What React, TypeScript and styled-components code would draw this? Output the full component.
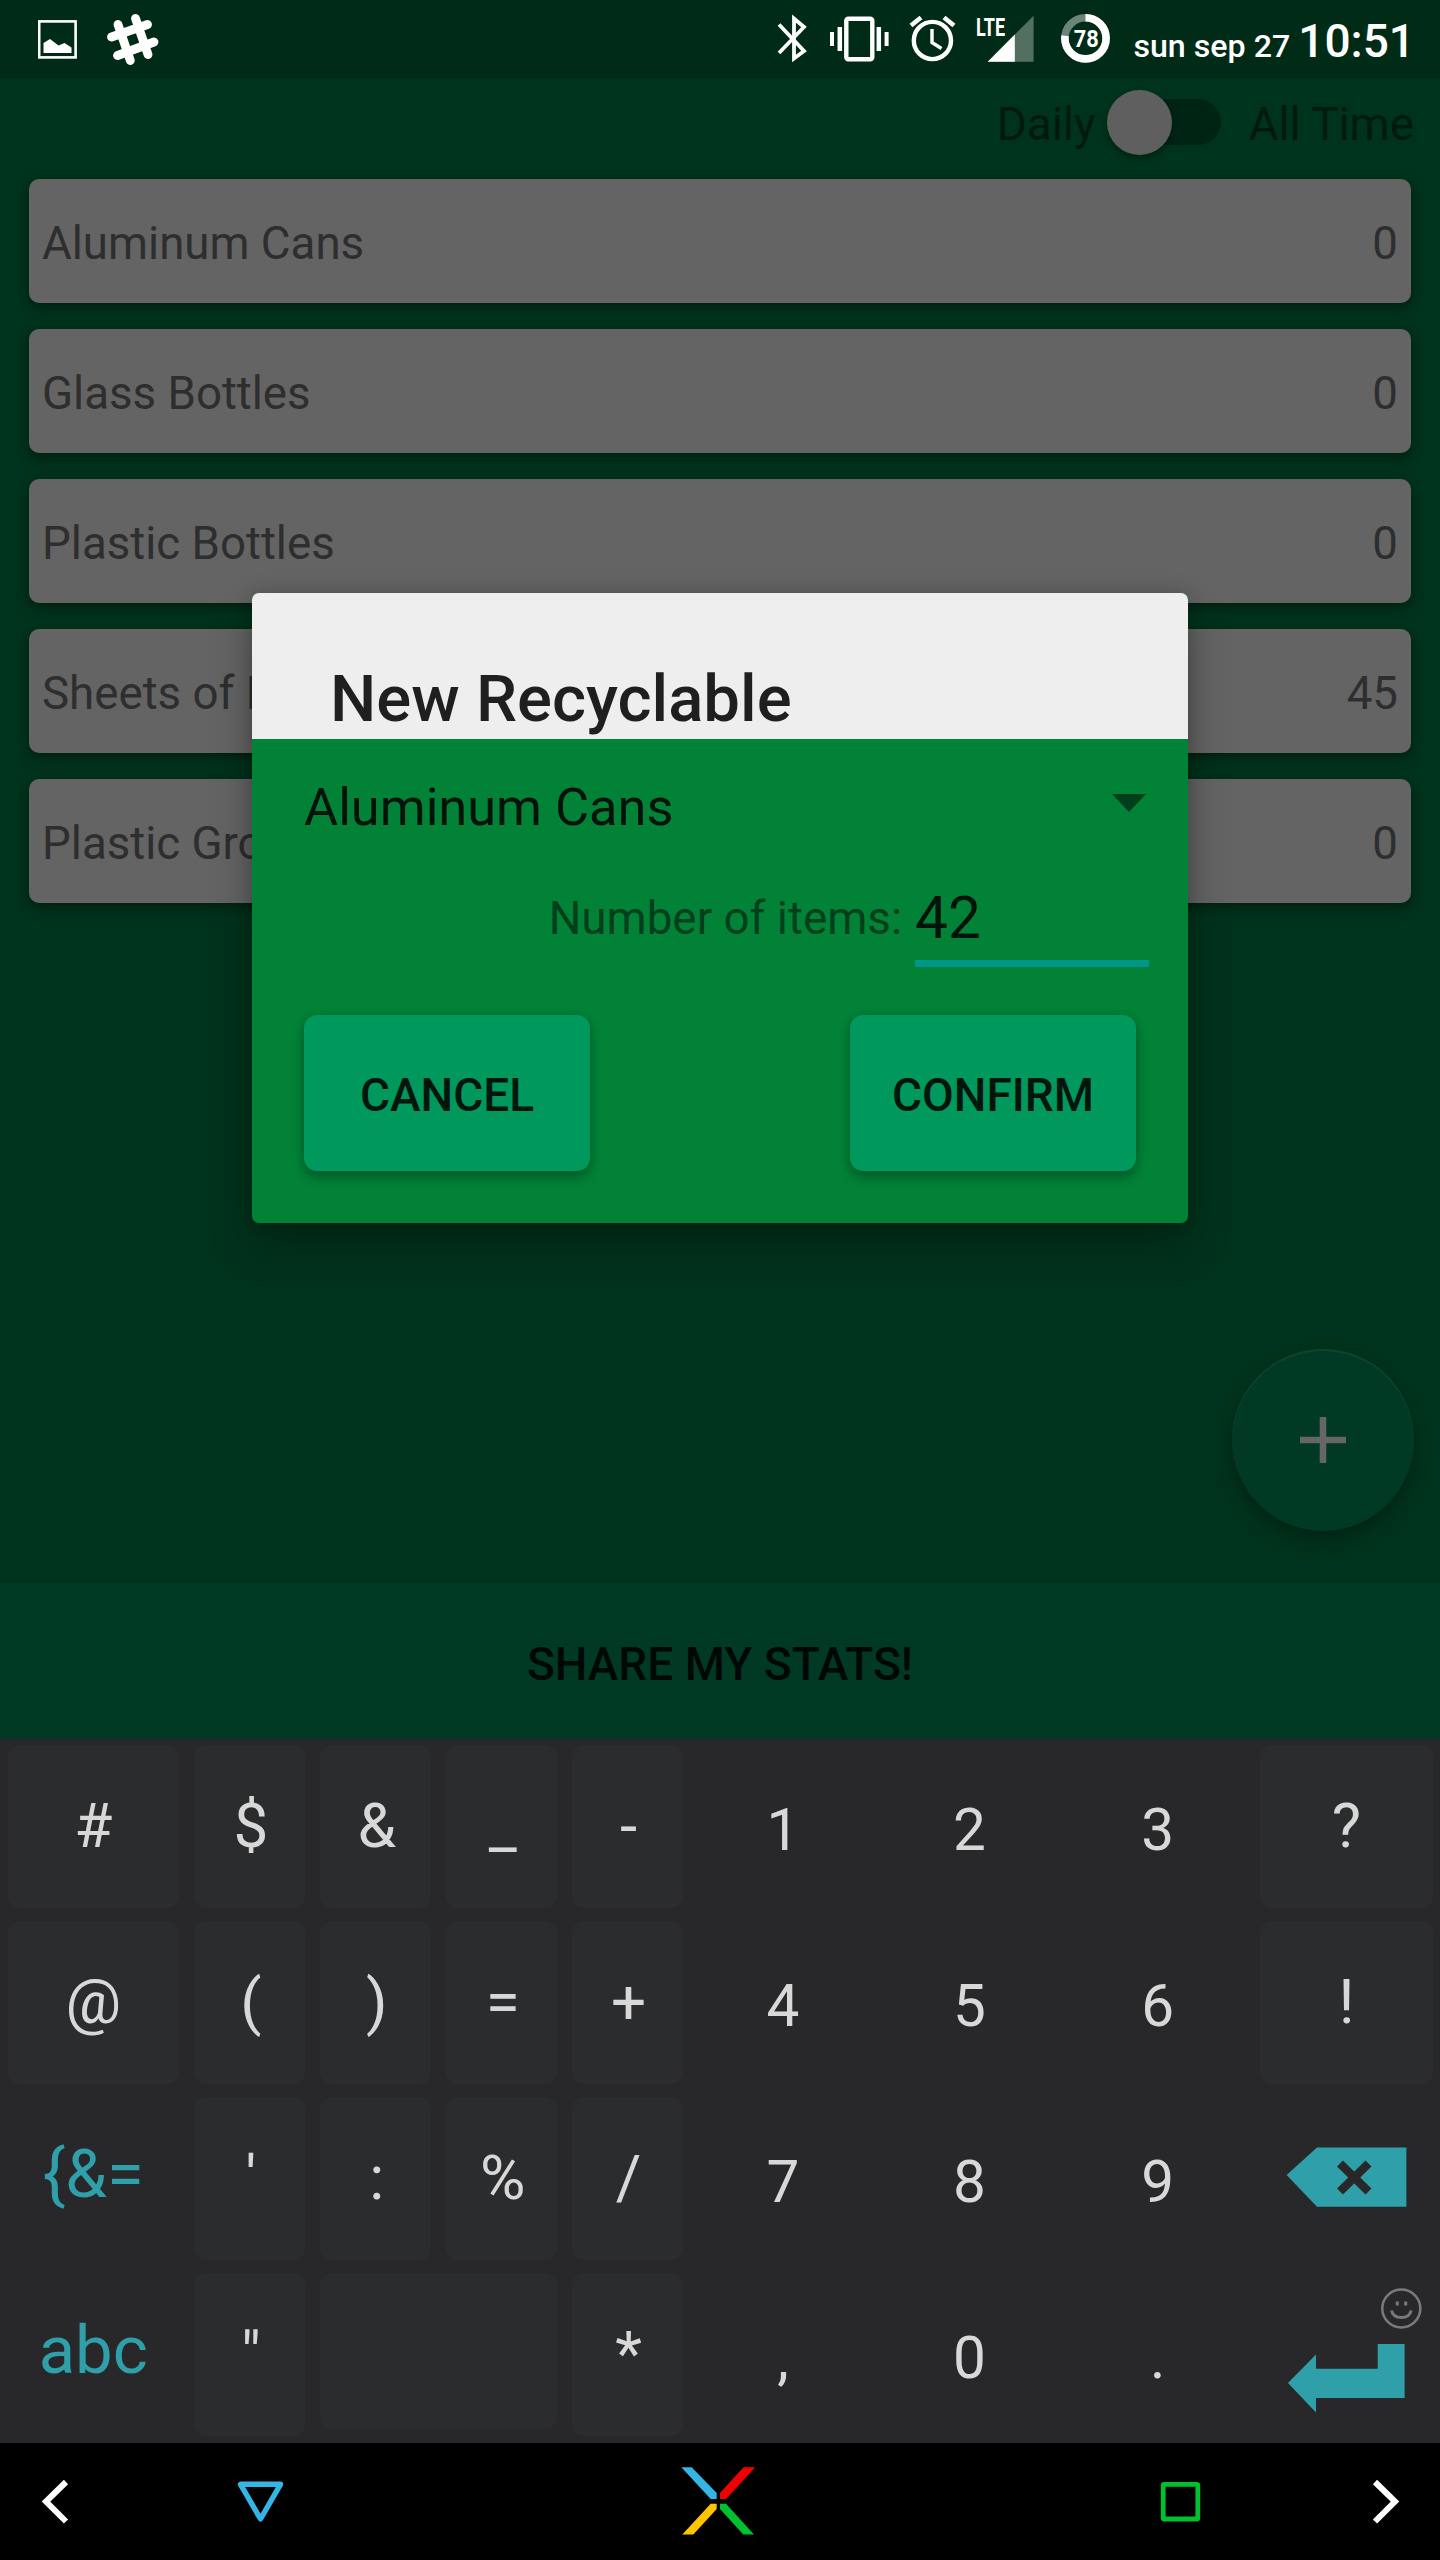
import React from "react";
import styled, { createGlobalStyle } from "styled-components";

const Global = createGlobalStyle`
  * { box-sizing: border-box; }
  body { margin: 0; background: #000; font-family: Roboto, "Liberation Sans", sans-serif; }
  button { font-family: inherit; border: 0; padding: 0; margin: 0; }
`;

const Screen = styled.div`
  position: relative;
  display: flex;
  flex-direction: column;
  width: 1440px;
  height: 2560px;
  overflow: hidden;
  background: #00331c;
`;

const StatusBar = styled.header`
  display: flex;
  justify-content: space-between;
  height: 78px;
  background: #002b16;
  color: #fff;
`;
const Notifications = styled.div`
  display: flex;
  gap: 30px;
  padding: 14px 0 0 38px;
`;
const System = styled.div`
  display: flex;
  padding-right: 25px;
`;
const SystemIcons = styled.svg`
  display: block;
  width: 340px;
  height: 78px;
`;
const Clock = styled.div`
  display: flex;
  align-items: baseline;
  justify-content: flex-end;
  gap: 8px;
  width: 305px;
  line-height: 83px;
  font-weight: 500;
  white-space: nowrap;
`;
const DateText = styled.span`
  font-size: 32.2px;
`;
const TimeText = styled.span`
  font-size: 46px;
`;

const ToggleRow = styled.div`
  display: flex;
  justify-content: flex-end;
  align-items: center;
  height: 88px;
  padding-right: 26px;
  font-size: 45.75px;
  line-height: 54px;
  color: #001a0e;
`;
const ToggleLabel = styled.span`
  padding-top: 5px;
`;
const Switch = styled.div`
  display: flex;
  align-items: center;
  width: 109px;
  height: 46px;
  margin: 0 28px 0 16px;
  border-radius: 23px;
  background: #002414;
`;
const Thumb = styled.div`
  width: 65px;
  height: 65px;
  margin-left: -5px;
  border-radius: 50%;
  background: #5f5f5f;
  box-shadow: 0 4px 6px rgba(0, 0, 0, 0.3);
  flex: none;
`;

const List = styled.main`
  display: flex;
  flex: 1;
  flex-direction: column;
  gap: 26px;
  padding: 13px 29px 0;
`;
const Card = styled.div`
  display: flex;
  justify-content: space-between;
  align-items: center;
  height: 124px;
  padding: 6px 13px 0;
  border-radius: 10px;
  background: #646464;
  box-shadow: 0 6px 12px rgba(0, 0, 0, 0.3), 0 0 8px rgba(0, 0, 0, 0.14);
  color: #2e2e2e;
  font-size: 45.65px;
  line-height: 54px;
`;

const Fab = styled.button`
  position: absolute;
  left: 1232px;
  top: 1349px;
  display: grid;
  place-items: center;
  width: 182px;
  height: 182px;
  border-radius: 50%;
  background: #003a25;
  box-shadow: 0 9px 16px rgba(0, 0, 0, 0.28), inset 0 2px 1px rgba(255, 255, 255, 0.06);
`;
const ShareButton = styled.button`
  height: 156px;
  padding-top: 5px;
  background: #003a25;
  color: #000805;
  font-size: 46px;
  font-weight: 500;
`;

const Dialog = styled.section`
  position: absolute;
  left: 252px;
  top: 593px;
  display: flex;
  flex-direction: column;
  width: 936px;
  height: 630px;
  border-radius: 7px;
  overflow: hidden;
  background: #028237;
  box-shadow: 0 20px 42px rgba(0, 0, 0, 0.3), 0 0 16px rgba(0, 0, 0, 0.16);
`;
const Title = styled.h1`
  height: 146px;
  margin: 0;
  padding: 68px 78px 0;
  background: #eee;
  color: #1f1f1f;
  font-size: 65.25px;
  font-weight: 500;
  line-height: 76px;
`;
const Spinner = styled.div`
  display: flex;
  justify-content: space-between;
  align-items: center;
  height: 128px;
  padding: 6px 42px 0 52px;
  color: #00130a;
  font-size: 52.35px;
  line-height: 60px;
`;
const SpinnerValue = styled.span`
  padding-top: 2px;
`;
const Arrow = styled.svg`
  display: block;
  width: 34px;
  height: 18px;
  margin-top: -7px;
`;
const CountRow = styled.div`
  display: flex;
  justify-content: flex-end;
  gap: 13px;
  height: 100px;
  padding: 0 39px 0 0;
`;
const CountLabel = styled.label`
  padding-top: 25px;
  color: #003f1b;
  font-size: 45.75px;
  line-height: 54px;
`;
const CountInput = styled.div`
  width: 234px;
  height: 100px;
  padding-top: 16px;
  border-bottom: 7px solid #009688;
  color: #00130a;
  font-size: 58.5px;
  line-height: 70px;
`;
const Actions = styled.div`
  display: flex;
  justify-content: space-between;
  padding: 48px 52px 52px;
`;
const ActionButton = styled.button`
  width: 286px;
  height: 156px;
  padding-top: 4px;
  border-radius: 13px;
  background: #00985d;
  box-shadow: 0 7px 12px rgba(0, 0, 0, 0.26), 0 0 8px rgba(0, 0, 0, 0.12);
  color: #00150c;
  font-size: 46px;
  font-weight: 500;
`;

const Keyboard = styled.div`
  display: grid;
  grid-template-columns: 186.5px repeat(4, 125.9px) 186px 187px 189.400px 1fr;
  grid-template-rows: repeat(4, 176px);
  height: 704px;
  background: #28282a;
`;
type KeyKind = "symbol" | "digit" | "mode";
const Key = styled.button<{ $kind: KeyKind; $wide?: boolean; $edge?: boolean }>`
  grid-column: span ${(p) => (p.$wide ? 2 : 1)};
  display: flex;
  justify-content: center;
  margin: 6px 7.5px ${(p) => (p.$wide ? 14 : 7)}px;
  padding-top: ${(p) => (p.$kind === "digit" ? 48 : p.$kind === "mode" ? 40 : 44)}px;
  padding-left: ${(p) => (p.$kind === "symbol" && !p.$edge ? 3 : 0)}px;
  border-radius: 12px;
  background: ${(p) => (p.$kind === "symbol" ? "#2b2c2e" : "transparent")};
  color: ${(p) => (p.$kind === "mode" ? "#2f9fa9" : "#d8d8d8")};
  font-size: ${(p) => (p.$kind === "digit" ? 58.5 : p.$kind === "mode" ? 67 : 62)}px;
  line-height: 74px;
  white-space: nowrap;
`;
const IconKey = styled.div`
  display: flex;
  height: 176px;
`;

const NavBar = styled.nav`
  height: 117px;
  background: #000;
`;

const ITEMS: [string, number][] = [
  ["Aluminum Cans", 0],
  ["Glass Bottles", 0],
  ["Plastic Bottles", 0],
  ["Sheets of Paper", 45],
  ["Plastic Grocery Bags", 0],
];

const ROWS: string[][] = [
  ["#", "$", "&", "_", "-", "1", "2", "3", "?"],
  ["@", "(", ")", "=", "+", "4", "5", "6", "!"],
  ["{&=", "'", ":", "%", "/", "7", "8", "9", "backspace"],
  ["abc", '"', " ", "*", ",", "0", ".", "enter"],
];

const kindOf = (k: string): KeyKind => {
  if (k === "{&=" || k === "abc") return "mode";
  if (/^[0-9.,]$/.test(k)) return "digit";
  return "symbol";
};

const PictureIcon = () => (
  <svg width="39" height="52" viewBox="38 14 39 52">
    <rect x="39.2" y="21.4" width="36.4" height="36" fill="none" stroke="#fff" strokeWidth="2.6" />
    <path d="M43.500 53V43l6.500-4 8.500 6.500 6-2.500 7 4.500V53z" fill="#fff" />
  </svg>
);

const HashIcon = () => (
  <svg width="52" height="52" viewBox="107 14 52 52" stroke="#fff" strokeWidth="8.8" strokeLinecap="round">
    <path d="M118 24.500 130.300 60.500M135.500 18.500 148 54.500M111.500 37 147.500 24.500M117.500 55.500 154 42" />
  </svg>
);

const StatusIcons = () => (
  <SystemIcons viewBox="770 0 340 78" fill="none" stroke="#fff">
    <path d="M779 24.500 804 51 794 58.500V18.500L804 27 779 53" strokeWidth="3.800" />
    <rect x="846.300" y="18.800" width="26" height="40.500" rx="2" strokeWidth="4.400" />
    <path d="M832 32V46M886.600 32V46" strokeWidth="4" />
    <path d="M839.800 27V51M878.800 27V51" strokeWidth="4.500" />
    <circle cx="932.400" cy="40.500" r="18.600" strokeWidth="4.400" />
    <path d="M932 29V42.500L941.500 48.500" strokeWidth="3.400" />
    <path d="M911 25.500 921 17.500M954 25.500 944 17.500" strokeWidth="4.600" />
    <path d="M1033.600 15.700V61.700H987.700z" fill="#fff" fillOpacity=".32" stroke="none" />
    <path d="M1014.800 34.500V61.700H987.700z" fill="#fff" stroke="none" />
    <text x="976" y="36" fill="#fff" stroke="none" fontSize="26.500" fontWeight="700" textLength="29" lengthAdjust="spacingAndGlyphs">LTE</text>
    <circle cx="1085.500" cy="38.300" r="20.600" strokeOpacity=".42" strokeWidth="7.600" />
    <circle cx="1085.500" cy="38.300" r="20.600" strokeWidth="7.600" pathLength="100" strokeDasharray="77 23" transform="rotate(-90 1085.5 38.3)" />
    <text x="1073.700" y="47" fill="#fff" stroke="none" fontSize="24.500" fontWeight="700" textLength="25" lengthAdjust="spacingAndGlyphs">78</text>
  </SystemIcons>
);

const BackspaceIcon = () => (
  <svg width="188" height="176" viewBox="1252 2091 188 176">
    <path d="M1286.600 2175 1317 2147.500H1406.400V2206.700H1317z" fill="#2f9fa9" />
    <path d="M1340 2163.500 1368.500 2191.500M1368.500 2163.500 1340 2191.500" stroke="#28282a" strokeWidth="8.500" />
  </svg>
);

const EnterIcon = () => (
  <svg width="188" height="176" viewBox="1252 2267 188 176">
    <path d="M1288 2383 1316 2354.500V2368.700H1377.700V2344H1404.600V2398H1316V2412.500z" fill="#2f9fa9" />
    <g fill="none" stroke="#7a7a7b">
      <circle cx="1401.300" cy="2308.500" r="19" strokeWidth="2.500" />
      <path d="M1391.500 2310.500Q1393 2317.500 1401.300 2317.500T1411.200 2310.500" strokeWidth="3" />
      <path d="M1397.300 2301.500V2305.500M1405.700 2301.500V2305.500" strokeWidth="3" />
    </g>
  </svg>
);

const NavIcons = () => (
  <svg width="1440" height="117" viewBox="0 2443 1440 117" fill="none" display="block">
    <path d="M66 2482 46 2501.500 66 2521.500M1375 2482 1395 2501.500 1375 2521.500" stroke="#fff" strokeWidth="6" />
    <path d="M240.500 2484.300H280.500L260.500 2519z" stroke="#33b5e5" strokeWidth="5.400" strokeLinejoin="round" />
    <path d="M681.300 2467.300H691.700L716.700 2493V2499H710.700z" fill="#33b5e5" />
    <path d="M755.300 2467.300H743.500L720 2493V2499H726z" fill="#f00000" />
    <path d="M682.300 2534.400H693.300L716.700 2509V2503.700H710.700z" fill="#ffc400" />
    <path d="M754 2534.400H743.300L720 2509V2503.700H726z" fill="#00c030" />
    <rect x="1163.200" y="2484.400" width="34.600" height="34.600" rx="1" stroke="#00c030" strokeWidth="4.800" />
  </svg>
);

export default function App() {
  return (
    <>
      <Global />
      <Screen>
        <StatusBar>
          <Notifications>
            <PictureIcon />
            <HashIcon />
          </Notifications>
          <System>
            <StatusIcons />
            <Clock>
              <DateText>sun sep 27</DateText>
              <TimeText>10:51</TimeText>
            </Clock>
          </System>
        </StatusBar>
        <ToggleRow>
          <ToggleLabel>Daily</ToggleLabel>
          <Switch>
            <Thumb />
          </Switch>
          <ToggleLabel>All Time</ToggleLabel>
        </ToggleRow>
        <List>
          {ITEMS.map(([name, count]) => (
            <Card key={name}>
              <span>{name}</span>
              <span>{count}</span>
            </Card>
          ))}
        </List>
        <ShareButton>SHARE MY STATS!</ShareButton>
        <Keyboard>
          {ROWS.map((row) =>
            row.map((k, i) =>
              k === "backspace" || k === "enter" ? (
                <IconKey key={k}>{k === "enter" ? <EnterIcon /> : <BackspaceIcon />}</IconKey>
              ) : (
                <Key key={k} $kind={kindOf(k)} $wide={k === " "} $edge={i === 0 || i === 8}>
                  {k}
                </Key>
              )
            )
          )}
        </Keyboard>
        <NavBar>
          <NavIcons />
        </NavBar>
        <Fab aria-label="Add">
          <svg width="46" height="46" viewBox="0 0 46 46">
            <path d="M23 0V46M0 23H46" stroke="#666" strokeWidth="6.600" />
          </svg>
        </Fab>
        <Dialog>
          <Title>New Recyclable</Title>
          <Spinner>
            <SpinnerValue>Aluminum Cans</SpinnerValue>
            <Arrow viewBox="0 0 34 18">
              <path d="M0 0H34L17 18z" fill="#003f1b" />
            </Arrow>
          </Spinner>
          <CountRow>
            <CountLabel>Number of items:</CountLabel>
            <CountInput>42</CountInput>
          </CountRow>
          <Actions>
            <ActionButton>CANCEL</ActionButton>
            <ActionButton>CONFIRM</ActionButton>
          </Actions>
        </Dialog>
      </Screen>
    </>
  );
}
